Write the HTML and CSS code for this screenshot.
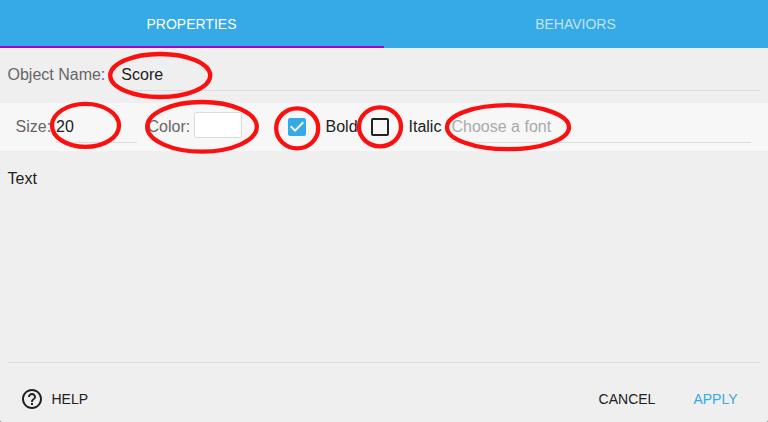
FILE: index.html
```html
<!DOCTYPE html>
<html lang="en">
<head>
<meta charset="utf-8">
<title>Object properties</title>
<link rel="stylesheet" href="styles.css">
</head>
<body>
<main class="dialog">
  <nav class="tabs">
    <a class="tab tab-active">PROPERTIES</a>
    <a class="tab">BEHAVIORS</a>
  </nav>
  <div class="name-row">
    <span class="label">Object Name:</span>
    <div class="field name-field">Score</div>
  </div>
  <div class="toolbar">
    <span class="label size-label">Size:</span>
    <div class="field size-field">20</div>
    <span class="label color-label">Color:</span>
    <div class="swatch"></div>
    <svg class="check check-bold" viewBox="0 0 24 24"><path fill="#36a9e7" d="M19 3H5c-1.110 0-2 .9-2 2v14c0 1.100.89 2 2 2h14c1.110 0 2-.9 2-2V5c0-1.100-.89-2-2-2zm-9 14l-5-5 1.410-1.410L10 14.170l7.590-7.590L19 8l-9 9z"/></svg>
    <span class="check-label bold-label">Bold</span>
    <svg class="check" viewBox="0 0 24 24"><path fill="#212121" d="M19 5v14H5V5h14m0-2H5c-1.100 0-2 .9-2 2v14c0 1.100.9 2 2 2h14c1.100 0 2-.9 2-2V5c0-1.100-.9-2-2-2z"/></svg>
    <span class="check-label italic-label">Italic</span>
    <div class="field font-field">Choose a font</div>
  </div>
  <div class="text-area">Text</div>
  <footer class="footer">
    <svg class="help-icon" viewBox="0 0 24 24"><path fill="#212121" d="M11 18h2v-2h-2v2zm1-16C6.480 2 2 6.480 2 12s4.480 10 10 10 10-4.480 10-10S17.520 2 12 2zm0 18c-4.410 0-8-3.590-8-8s3.590-8 8-8 8 3.590 8 8-3.590 8-8 8zm0-14c-2.210 0-4 1.790-4 4h2c0-1.100.9-2 2-2s2 .9 2 2c0 2-3 1.750-3 5h2c0-2.250 3-2.500 3-5 0-2.210-1.790-4-4-4z"/></svg>
    <span class="help">HELP</span>
    <span class="cancel">CANCEL</span>
    <span class="apply">APPLY</span>
  </footer>
  <svg class="marks" viewBox="0 0 768 422">
    <ellipse cx="160.200" cy="75.500" rx="50" ry="21.500"/>
    <ellipse cx="85.500" cy="125.400" rx="33.500" ry="21.500"/>
    <ellipse cx="202" cy="126.800" rx="54.800" ry="24.800"/>
    <ellipse cx="297.200" cy="128.300" rx="21" ry="20"/>
    <ellipse cx="380" cy="126.800" rx="21" ry="19.500"/>
    <ellipse cx="508" cy="127.200" rx="61" ry="22"/>
  </svg>
</main>
</body>
</html>
```
FILE: styles.css
```css
* { box-sizing: border-box; }
html { background: #777; }
body {
  margin: 0;
  font: 16px/20px "Liberation Sans", Arial, sans-serif;
  color: #212121;
}
.dialog {
  position: relative;
  display: flex;
  flex-direction: column;
  height: 422px;
  background: #efefef;
  border-radius: 0 0 2px 2px;
  overflow: hidden;
}
.tabs {
  display: flex;
  height: 48px;
  background: #36a9e7;
  font-size: 14px;
}
.tab {
  flex: 1;
  display: flex;
  align-items: center;
  justify-content: center;
  color: rgba(255, 255, 255, .7);
  border-bottom: 2px solid transparent;
  padding: 2px 1px 0 0;
}
.tab-active { color: #fff; border-bottom-color: #aa00c7; }
.name-row {
  display: flex;
  height: 55px;
  padding: 16px 8px 12px 7.5px;
}
.label { color: #666; line-height: 21px; white-space: nowrap; }
.field { border-bottom: 1px solid #dcdcdc; line-height: 21px; white-space: nowrap; }
.name-field { flex: 1; margin-left: 16px; }
.toolbar {
  display: flex;
  height: 48px;
  padding: 13px 17px 8px 15.5px;
  background: #f7f7f7;
}
.size-label { width: 40.5px; }
.size-field { width: 81px; }
.color-label { width: 46.5px; margin-left: 10.5px; }
.swatch {
  width: 48px;
  height: 26px;
  margin-top: -4px;
  background: #fff;
  border: 1px solid #dcdcdc;
  border-radius: 2px;
}
.check { width: 24px; height: 24px; margin-top: -1px; flex: none; }
.check-bold { margin-left: 43px; }
.check-label { line-height: 21px; white-space: nowrap; }
.bold-label { width: 42.5px; margin-left: 16.5px; }
.italic-label { width: 43px; margin-left: 16.5px; }
.font-field { flex: 1; color: #aaa; }
.text-area {
  height: 212px;
  margin: 0 8px;
  padding-top: 17px;
  line-height: 21px;
  text-indent: -.5px;
  border-bottom: 1px solid #dcdcdc;
}
.footer {
  display: flex;
  align-items: center;
  height: 59px;
  padding: 13px 30.5px 0 20px;
  font-size: 14px;
}
.help-icon { width: 24px; height: 24px; margin-right: 7.5px; }
.help { flex: 1; }
.cancel { margin-right: 38px; }
.apply { color: #36a9e7; }
.marks {
  position: absolute;
  inset: 0;
  width: 768px;
  height: 422px;
  fill: none;
  stroke: #fb1010;
  stroke-width: 4.3;
}
```
